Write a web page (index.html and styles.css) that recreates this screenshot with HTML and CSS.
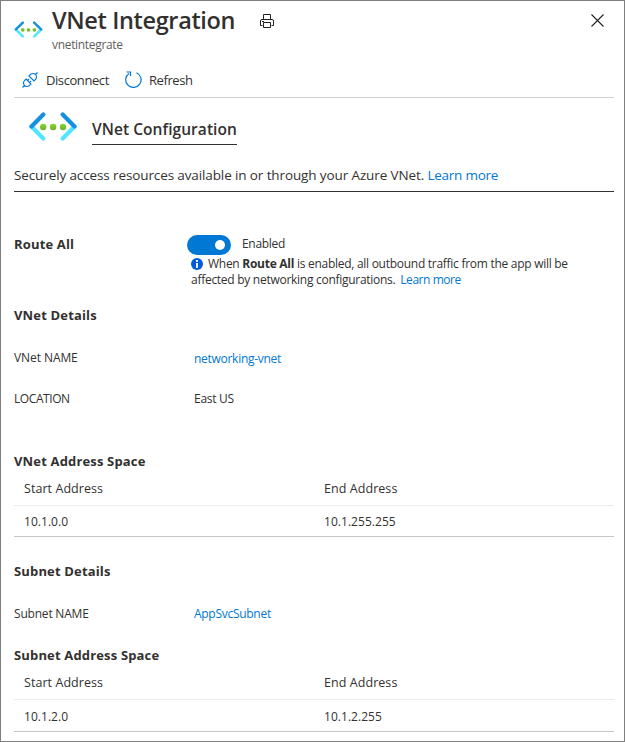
FILE: index.html
```html
<!DOCTYPE html>
<html lang="en">
<head>
<meta charset="utf-8">
<title>VNet Integration</title>
<link rel="stylesheet" href="styles.css">
</head>
<body>
<svg class="defs" width="0" height="0" aria-hidden="true">
  <linearGradient id="dot" x2="0" y2="1"><stop offset="0" stop-color="#86d633"/><stop offset="1" stop-color="#6bb02a"/></linearGradient>
  <symbol id="vnet" viewBox="0 0 48 29">
    <path d="M14.3 26.4 2.5 14.6M33.7 26.4 45.5 14.6" stroke="#50e6ff" stroke-width="4.2" stroke-linecap="round"/>
    <path d="M14.3 2.6 2.5 14.4M33.7 2.6 45.5 14.4" stroke="#1490df" stroke-width="4.2" stroke-linecap="round"/>
    <circle cx="14.2" cy="15" r="3.2" fill="url(#dot)"/>
    <circle cx="24.1" cy="15" r="3.2" fill="url(#dot)"/>
    <circle cx="34" cy="15" r="3.2" fill="url(#dot)"/>
  </symbol>
</svg>
<main class="blade">
  <header class="blade-header">
    <svg class="header-icon"><use href="#vnet"/></svg>
    <div class="titles">
      <h1>VNet Integration</h1>
      <p class="subtitle">vnetintegrate</p>
    </div>
    <svg class="print" viewBox="0 0 14 14" stroke="#222" stroke-width="1">
      <path d="M3.5 5.5v-5h7v5M2.5 11.5h-2v-4.5q0-1.5 1.5-1.5h10q1.5 0 1.5 1.5v4.5h-2M3.5 8.5h7v5h-7zM2 7.5h2"/>
    </svg>
    <svg class="close" viewBox="0 0 13 13" stroke="#222" stroke-width="1.1"><path d="M.5.5l12 12M12.5.5l-12 12"/></svg>
  </header>
  <nav class="toolbar">
    <svg class="plug" viewBox="0 0 16 16" stroke="#0078d4" stroke-width="1.1">
      <path d="M.5 15.5 2.5 13.5M15.5.5l-2 2M4 7l5 5-1.5 1.5q-2.5 2-5 0-2-2.500 0-5zM7 4l5 5 1.500-1.500q2-2.500 0-5-2.500-2-5 0zM5.500 8.500 7 7M7.500 10.500 9 9"/>
    </svg>
    <span class="cmd disconnect">Disconnect</span>
    <svg class="refresh" viewBox="0 0 17 17" stroke="#0078d4" stroke-width="1.2">
      <path d="M11.5 1.7A7.7 7.7 0 1 1 4 2.4M1.5 1h4v4"/>
    </svg>
    <span class="cmd">Refresh</span>
  </nav>
  <section class="config">
    <svg class="config-icon"><use href="#vnet"/></svg>
    <h2>VNet Configuration</h2>
  </section>
  <p class="intro">Securely access resources available in or through your Azure VNet. <a>Learn more</a></p>
  <section class="route">
    <h3>Route All</h3>
    <div class="route-body">
      <div class="switch"><i class="toggle"></i><span>Enabled</span></div>
      <p class="note"><svg class="info" viewBox="0 0 12 12"><circle cx="6" cy="6" r="6" fill="#015cda"/><path d="M6 2v2M6 5v5" stroke="#fff" stroke-width="1.8"/></svg>When <b>Route All</b> is enabled, all outbound traffic from the app will be<br>affected by networking configurations. <a class="more">Learn more</a></p>
    </div>
  </section>
  <section class="details vnet">
    <h3>VNet Details</h3>
    <div class="field"><span class="vnet-label">VNet NAME</span><a class="drop">networking-vnet</a></div>
    <div class="field"><span class="location">LOCATION</span><span>East US</span></div>
  </section>
  <section class="space">
    <h3>VNet Address Space</h3>
    <div class="row head"><span>Start Address</span><span>End Address</span></div>
    <div class="row"><span>10.1.0.0</span><span>10.1.255.255</span></div>
  </section>
  <section class="details subnet">
    <h3>Subnet Details</h3>
    <div class="field"><span class="subnet-label">Subnet NAME</span><a>AppSvcSubnet</a></div>
  </section>
  <section class="space last">
    <h3>Subnet Address Space</h3>
    <div class="row head"><span>Start Address</span><span>End Address</span></div>
    <div class="row"><span>10.1.2.0</span><span>10.1.2.255</span></div>
  </section>
</main>
</body>
</html>
```

FILE: styles.css
```css
* { box-sizing: border-box; margin: 0; padding: 0; }
body { background: #fff; }
.defs { position: absolute; }
.blade { width: 625px; height: 742px; padding: 4px 10px 0 13px; border: 1px solid #7f7f7f; color: #323130; font: 12px/16px "Open Sans", "Noto Sans", sans-serif; }
svg { flex: none; fill: none; }
a { color: #0078d4; }
.blade-header { display: flex; height: 59px; }
.header-icon { width: 29px; height: 17px; margin-top: 16px; }
.titles { width: 184px; margin-left: 9px; white-space: nowrap; }
h1 { font-size: 23.5px; line-height: 30px; font-weight: 600; letter-spacing: -.36px; }
.subtitle { line-height: 19px; color: #605e5c; letter-spacing: -.32px; }
.print { width: 14px; height: 14px; margin: 9px 0 0 24px; }
.close { width: 13px; height: 13px; margin: 9px 10px 0 auto; }
.toolbar { display: flex; align-items: center; height: 34px; padding: 0 0 1px 8px; border-bottom: 1px solid #d2d0ce; font-size: 13px; letter-spacing: -.42px; }
.plug { width: 16px; height: 16px; margin-right: 8px; }
.disconnect { width: 79px; }
.refresh { width: 17px; height: 17px; margin: 0 7px 2px 0; }
.config { display: flex; height: 62px; padding: 14px 0 0 15px; }
.config-icon { width: 48px; height: 29px; }
h2 { width: 145px; height: 31px; margin: 2px 0 0 15px; border-bottom: 1px solid #323130; font-size: 15.5px; line-height: 30px; font-weight: 600; letter-spacing: .06px; white-space: nowrap; }
.intro { height: 32px; border-bottom: 1px solid #323130; font-size: 13.5px; line-height: 30px; letter-spacing: -.115px; white-space: nowrap; }
.intro a { letter-spacing: -.26px; }
h3 { font-size: 13px; line-height: 20px; font-weight: 700; letter-spacing: .16px; }
.route { display: grid; grid-template-columns: 173px 1fr; height: 113px; padding-top: 43px; }
.route h3 { line-height: 18px; }
.switch { display: flex; gap: 11px; height: 21px; line-height: 18px; letter-spacing: -.3px; }
.toggle { width: 44px; height: 20px; padding: 5px; border-radius: 10px; background: #0078d4; }
.toggle::after { content: ""; display: block; width: 10px; height: 10px; margin-left: 23px; border-radius: 50%; background: #fff; }
.note { padding-left: 4px; letter-spacing: -.275px; white-space: nowrap; }
.info { width: 12px; height: 12px; margin-right: 5px; vertical-align: -2px; }
.more { margin-left: 2px; letter-spacing: -.45px; }
.field { display: grid; grid-template-columns: 180px 1fr; height: 41px; line-height: 20px; letter-spacing: -.28px; }
.vnet-label { letter-spacing: -.08px; }
.location { letter-spacing: -.42px; }
.subnet-label { letter-spacing: -.2px; }
.details h3 { margin-bottom: 23px; }
.vnet { height: 146px; }
.drop { padding-top: 1px; }
.space { height: 110px; }
.row { display: grid; grid-template-columns: 300px 1fr; height: 31px; padding-left: 10px; border-bottom: 1px solid #c8c6c4; line-height: 31px; letter-spacing: .04px; }
.head { height: 35px; border-color: #edebe9; font-size: 12.5px; line-height: 35px; font-weight: 500; letter-spacing: .06px; }
.subnet { height: 84px; }
.last .row:last-child { height: 32px; line-height: 33px; }
```
